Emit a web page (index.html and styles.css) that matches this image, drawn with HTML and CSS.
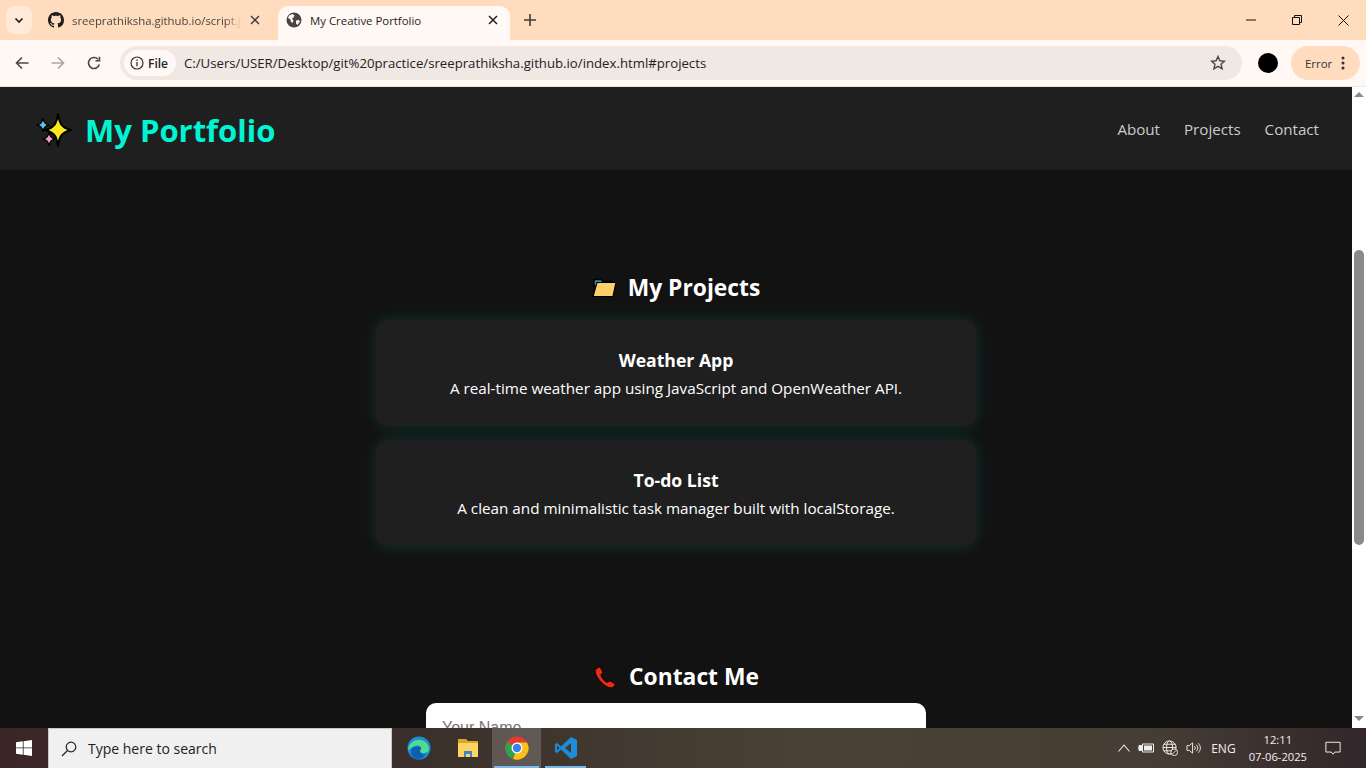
FILE: index.html
```html
<!DOCTYPE html>
<html lang="en">
<head>
    <meta charset="UTF-8">
    <title>My Creative Portfolio</title>
    <link rel="stylesheet" href="styles.css">
</head>
<body>
    <div class="tabstrip">
        <div class="tab-list-btn">
            <svg width="12" height="12" viewBox="0 0 12 12"><path d="M2.500 4.500 6 8l3.500-3.500" fill="none" stroke="#1f1f1f" stroke-width="1.700"/></svg>
        </div>
        <div class="tab">
            <svg class="favicon" width="16" height="16" viewBox="0 0 16 16"><path fill="#1f1f1f" d="M8 0C3.580 0 0 3.580 0 8c0 3.540 2.290 6.530 5.470 7.590.4.070.55-.17.55-.38 0-.19-.01-.82-.01-1.490-2.010.37-2.530-.49-2.690-.94-.09-.23-.48-.94-.82-1.130-.28-.15-.68-.52-.01-.53.63-.01 1.080.58 1.230.82.72 1.210 1.870.87 2.330.66.070-.52.28-.87.51-1.070-1.780-.2-3.640-.89-3.640-3.950 0-.87.31-1.590.82-2.150-.08-.2-.36-1.020.08-2.120 0 0 .67-.21 2.200.82.64-.18 1.320-.27 2-.27s1.360.09 2 .27c1.530-1.040 2.200-.82 2.200-.82.44 1.100.16 1.920.08 2.120.51.56.82 1.270.82 2.150 0 3.070-1.870 3.750-3.650 3.950.29.25.54.73.54 1.480 0 1.070-.01 1.930-.01 2.200 0 .21.15.46.55.38A8.010 8.010 0 0 0 16 8c0-4.420-3.580-8-8-8z"/></svg>
            <span class="tab-title fade">sreeprathiksha.github.io/script.j</span>
            <svg class="tab-close" width="10" height="10" viewBox="0 0 10 10"><path d="M1 1l8 8M9 1l-8 8" stroke="#3c3c3c" stroke-width="1.400"/></svg>
        </div>
        <div class="tab active">
            <svg class="favicon" width="16" height="16" viewBox="0 0 16 16"><circle cx="8" cy="8" r="7.500" fill="#454545"/><path fill="#fff4ee" d="M3 3.500 6.500 2l2 1.500L7.500 5.500 6 6.500l1.500 2L6.500 11 5 10 4.500 7.500 2 6zM10 8.500l3-.5 1 1.500-2.500 3.500-1.500-1.500z"/></svg>
            <span class="tab-title">My Creative Portfolio</span>
            <svg class="tab-close" width="10" height="10" viewBox="0 0 10 10"><path d="M1 1l8 8M9 1l-8 8" stroke="#1f1f1f" stroke-width="1.500"/></svg>
        </div>
        <svg class="new-tab" width="12" height="12" viewBox="0 0 12 12"><path d="M6 0v12M0 6h12" stroke="#3c3c3c" stroke-width="1.600"/></svg>
        <div class="window-btns">
            <svg width="10" height="10" viewBox="0 0 10 10"><path d="M0 5h10" stroke="#111" stroke-width="1"/></svg>
            <svg width="10" height="10" viewBox="0 0 10 10"><path d="M.5 2.500h7v7h-7zM2.500 2.500v-2h7v7h-2" fill="none" stroke="#111" stroke-width="1"/></svg>
            <svg width="11" height="11" viewBox="0 0 11 11"><path d="M.5.5l10 10M10.500.5l-10 10" stroke="#111" stroke-width="1"/></svg>
        </div>
    </div>

    <div class="toolbar">
        <svg class="nav-icon" width="14" height="14" viewBox="0 0 14 14"><path d="M13.500 7H1.500M7 1.500 1.500 7 7 12.500" fill="none" stroke="#474747" stroke-width="1.600"/></svg>
        <svg class="nav-icon" width="14" height="14" viewBox="0 0 14 14"><path d="M.5 7h12M7 1.500 12.500 7 7 12.500" fill="none" stroke="#a9a6a4" stroke-width="1.600"/></svg>
        <svg class="nav-icon" width="14" height="14" viewBox="0 0 14 14"><path d="M12.300 8.500A5.500 5.500 0 1 1 11 3.200M12.500 .8v4h-4" fill="none" stroke="#474747" stroke-width="1.600"/></svg>
        <div class="omnibox">
            <div class="site-chip">
                <svg width="14" height="14" viewBox="0 0 14 14"><circle cx="7" cy="7" r="6" fill="none" stroke="#333" stroke-width="1.200"/><path d="M7 6v4.200M7 3.600v1.300" stroke="#333" stroke-width="1.300"/></svg>
                <span>File</span>
            </div>
            <span class="url">C:/Users/USER/Desktop/git%20practice/sreeprathiksha.github.io/index.html#projects</span>
            <svg class="star" width="16" height="16" viewBox="0 0 16 16"><path d="M8 1.500l1.900 4.300 4.600.4-3.500 3 1.100 4.600L8 11.400l-4.100 2.400L5 9.200l-3.500-3 4.600-.4z" fill="none" stroke="#474747" stroke-width="1.400"/></svg>
        </div>
        <div class="avatar"></div>
        <div class="error-pill">
            <span>Error</span>
            <svg width="4" height="14" viewBox="0 0 4 14"><circle cx="2" cy="2" r="1.500" fill="#333"/><circle cx="2" cy="7" r="1.500" fill="#333"/><circle cx="2" cy="12" r="1.500" fill="#333"/></svg>
        </div>
    </div>

    <div class="viewport">
        <div class="page">
            <header class="site-header">
                <h1 class="logo">
                    <svg width="36" height="36" viewBox="0 0 36 36">
                        <path d="M22 1.500c1.200 10 3.500 14 13 16.500-9.500 2.500-11.800 6.500-13 16.500-1.200-10-3.500-14-13-16.500 9.500-2.500 11.800-6.500 13-16.500z" fill="#ffe81a" stroke="#000" stroke-width="2"/>
                        <path d="M7 6c.8 4.500 2 6 6.500 7-4.500 1-5.700 2.500-6.500 7-.8-4.500-2-6-6.500-7 4.500-1 5.700-2.500 6.500-7z" fill="#62c0f0" stroke="#000" stroke-width="1.300"/>
                        <path d="M13 20c.8 4.500 2 6 6.500 7-4.500 1-5.700 2.500-6.500 7-.8-4.500-2-6-6.500-7 4.500-1 5.700-2.500 6.500-7z" fill="#f59ccb" stroke="#000" stroke-width="1.300"/>
                    </svg>
                    <span class="logo-text">My Portfolio</span>
                </h1>
                <nav class="site-nav">
                    <a href="#about">About</a>
                    <a href="#projects">Projects</a>
                    <a href="#contact">Contact</a>
                </nav>
            </header>

            <section class="section projects" id="projects">
                <h2>
                    <svg width="24" height="20" viewBox="0 0 24 20"><path d="M2 1.500h7l2 2h9v5H2z" fill="#3f87b5" stroke="#000" stroke-width="1.500"/><path d="M5 4.500h19l-3 14H1z" fill="#fdd069" stroke="#000" stroke-width="1.200"/></svg>
                    <span>My Projects</span>
                </h2>
                <div class="card">
                    <h3>Weather App</h3>
                    <p>A real-time weather app using JavaScript and OpenWeather API.</p>
                </div>
                <div class="card">
                    <h3>To-do List</h3>
                    <p>A clean and minimalistic task manager built with localStorage.</p>
                </div>
            </section>

            <section class="section contact" id="contact">
                <h2>
                    <svg width="24" height="24" viewBox="0 0 24 24"><path d="M2 4.500 6.500 1.500c1 .2 3 4 3.500 6 .1.800-1.800 1.500-2 2.500 1 2.500 3.500 5.800 6 7 1 .2 1.800-1.500 2.800-1.300 1.800.8 5 2.500 5.700 3.800.2.800-2.500 3.500-3.500 3.500C11 23.500 1.500 12 2 4.500z" fill="#e0301a" stroke="#2a0000" stroke-width="1.400"/></svg>
                    <span>Contact Me</span>
                </h2>
                <form class="contact-form">
                    <input type="text" placeholder="Your Name">
                </form>
            </section>
        </div>
        <div class="scrollbar">
            <div class="arrow-up"></div>
            <div class="track"><div class="thumb"></div></div>
            <div class="arrow-down"></div>
        </div>
    </div>

    <div class="taskbar">
        <div class="start">
            <svg width="16" height="16" viewBox="0 0 16 16"><path fill="#fff" d="M0 2.300 6.800 1.300v6.200H0zM7.600 1.200 16 0v7.500H7.600zM0 8.300h6.800v6.400L0 13.700zM7.600 8.300H16V16l-8.400-1.200z"/></svg>
        </div>
        <div class="search">
            <svg width="16" height="16" viewBox="0 0 16 16"><circle cx="10" cy="6" r="4.800" fill="none" stroke="#222" stroke-width="1.200"/><path d="M6.500 9.500 1 15" stroke="#222" stroke-width="1.300"/></svg>
            <span>Type here to search</span>
        </div>
        <div class="task-icons">
            <div class="task-icon">
                <svg width="24" height="24" viewBox="0 0 24 24"><circle cx="12" cy="12" r="11.500" fill="#1d8ddb"/><path d="M1 14C2 6 9 3 14 4c5 1 8 5 8 9 0 3-3 4-6 4-2 0-3-1-3-2s1-2 1-3c0-2-3-3-6-2-3 1-5 3-7 4z" fill="#4fdc8f"/><path d="M5 12c3-2 8-2 9 0 .5 1-1 2-1 3 0 3 3 4 6 3-2 3-5 5-8 5-6 0-9-6-6-11z" fill="#0f5fb0"/></svg>
            </div>
            <div class="task-icon">
                <svg width="20" height="20" viewBox="0 0 20 20"><path d="M0 1h8l2 2h10v15H0z" fill="#e0a526"/><path d="M0 5h20v14H0z" fill="#fcd462"/><path d="M6 13h8v6h-2v-3H8v3H6z" fill="#3b88c4"/></svg>
            </div>
            <div class="task-icon open focused">
                <svg width="24" height="24" viewBox="0 0 24 24"><circle cx="12" cy="12" r="11.500" fill="#e33b2e"/><path d="M12 12 22 18A11.500 11.500 0 0 1 8 23z" fill="#fbc116"/><path d="M12 12 8 23A11.500 11.500 0 0 1 2 6z" fill="#2ea44f"/><path d="M12 6.500h10a11.500 11.500 0 0 1 0 11.500l-5-3z" fill="#fbc116"/><circle cx="12" cy="12" r="5.500" fill="#fff"/><circle cx="12" cy="12" r="4.200" fill="#3b82e8"/></svg>
            </div>
            <div class="task-icon open">
                <svg width="24" height="24" viewBox="0 0 24 24"><path d="M17 1 23 4v16l-6 3L7 13.500 3 17 1 16V8l2-1 4 3.500z" fill="#1c8ed8"/><path d="M17 7 11 12l6 5z" fill="#3e3a33"/><path d="M3 9.500 5.500 12 3 14.500z" fill="#3e3a33"/></svg>
            </div>
        </div>
        <div class="tray">
            <svg width="12" height="8" viewBox="0 0 12 8"><path d="M.5 7.500 6 1l5.500 6.500" fill="none" stroke="#eee" stroke-width="1.100"/></svg>
            <svg width="16" height="12" viewBox="0 0 16 12"><path d="M4.500 2h11v8h-11z" fill="none" stroke="#eee"/><path d="M6 3.500h8v5H6z" fill="#eee"/><path d="M0 6h3M1 3.500h2.500v5H1z" stroke="#eee" fill="#eee"/></svg>
            <svg width="16" height="16" viewBox="0 0 17 17"><g fill="none" stroke="#eee"><circle cx="8" cy="8" r="7"/><ellipse cx="8" cy="8" rx="3.200" ry="7"/><path d="M1 8h14M2 4.500h12M2 11.500h12"/></g><circle cx="13" cy="13" r="3.500" fill="#3a332d" stroke="#eee"/><path d="M11 15l4-4" stroke="#eee"/></svg>
            <svg width="16" height="14" viewBox="0 0 17 14"><path d="M1 4.500h2.500L7 1.500v11l-3.500-3H1z" fill="none" stroke="#eee"/><path d="M9 5c1 1 1 3 0 4M11 3.500c2 2 2 5 0 7M13 2c3 3 3 7 0 10" fill="none" stroke="#eee"/></svg>
            <span class="lang">ENG</span>
            <div class="clock"><span>12:11</span><span>07-06-2025</span></div>
            <svg class="notif" width="16" height="15" viewBox="0 0 18 16"><path d="M1 1h16v11h-6l-2 2.500L7 12H1z" fill="none" stroke="#eee" stroke-width="1.100"/></svg>
        </div>
    </div>
</body>
</html>
```

FILE: styles.css
```css
* {
    box-sizing: border-box;
}
body {
    margin: 0;
    height: 768px;
    overflow: hidden;
    display: flex;
    flex-direction: column;
    font-family: 'Open Sans', 'Noto Sans', sans-serif;
    background: #121212;
}

/* browser chrome */
.tabstrip {
    height: 40px;
    flex-shrink: 0;
    display: flex;
    align-items: flex-end;
    padding-left: 6px;
    background: #fedcbd;
}
.tab-list-btn {
    width: 26px;
    height: 28px;
    margin-bottom: 6px;
    border-radius: 8px;
    background: #ffe9d8;
    display: flex;
    align-items: center;
    justify-content: center;
}
.tab {
    width: 242px;
    height: 34px;
    padding: 0 14px 6px 16px;
    display: flex;
    align-items: center;
    gap: 8px;
    font-size: 11.4px;
    color: #4d4540;
}
.tab.active {
    width: 232px;
    padding: 0 12px 6px 8px;
    margin-left: 4px;
    border-radius: 10px 10px 0 0;
    background: #fff8f4;
    color: #1f1f1f;
}
.tab .favicon {
    flex-shrink: 0;
}
.tab-title {
    flex: 1;
    white-space: nowrap;
}
.tab-title.fade {
    -webkit-mask-image: linear-gradient(90deg, #000 90%, transparent 100%);
    mask-image: linear-gradient(90deg, #000 90%, transparent 100%);
}
.tab-close {
    flex-shrink: 0;
}
.new-tab {
    margin: 0 0 14px 14px;
}
.window-btns {
    margin-left: auto;
    height: 40px;
    display: flex;
    align-items: center;
    gap: 36px;
    padding-right: 17px;
}
.toolbar {
    height: 47px;
    flex-shrink: 0;
    display: flex;
    align-items: center;
    padding: 0 6px 0 15px;
    background: #fff8f4;
    border-bottom: 1px solid #f0e6df;
}
.nav-icon {
    margin-right: 22px;
}
.nav-icon:nth-child(3) {
    margin-right: 19px;
}
.omnibox {
    width: 1122px;
    height: 34px;
    border-radius: 17px;
    padding: 0 16px 0 4px;
    display: flex;
    align-items: center;
    background: #f0e8e3;
}
.site-chip {
    height: 26px;
    padding: 0 8px 0 6px;
    display: flex;
    align-items: center;
    gap: 4px;
    border-radius: 13px;
    background: #fff8f4;
    font-size: 12px;
    font-weight: 600;
    color: #222;
}
.url {
    margin-left: 8px;
    font-size: 13.2px;
    color: #222;
    white-space: nowrap;
}
.star {
    margin-left: auto;
}
.avatar {
    width: 20px;
    height: 20px;
    margin-left: 16px;
    border-radius: 50%;
    background: #000;
}
.error-pill {
    width: 69px;
    height: 34px;
    margin-left: 13px;
    border-radius: 17px;
    padding: 0 15px 0 14px;
    display: flex;
    align-items: center;
    justify-content: space-between;
    background: #fedcbd;
    font-size: 11.4px;
    color: #333;
}

/* page */
.viewport {
    flex: 1;
    min-height: 0;
    display: flex;
    overflow: hidden;
}
.page {
    flex: 1;
    min-width: 0;
    overflow: hidden;
    background: #121212;
    color: #fff;
}
.site-header {
    height: 83px;
    padding: 0 33px 0 36px;
    display: flex;
    align-items: center;
    justify-content: space-between;
    background: #1f1f1f;
}
.logo {
    margin: 0;
    padding-top: 3px;
    display: flex;
    align-items: center;
    gap: 13px;
    font-size: 31px;
    line-height: 1;
    color: #00f5d4;
}
.site-nav {
    display: flex;
    gap: 24px;
}
.site-nav a {
    color: #ccc;
    text-decoration: none;
    font-size: 15.15px;
}
.section {
    text-align: center;
}
.section h2 {
    margin: 0;
    display: flex;
    align-items: center;
    justify-content: center;
    gap: 12px;
    font-size: 22.8px;
    line-height: 32px;
}
.projects {
    padding-top: 102px;
}
.contact {
    padding-top: 115px;
}
.card {
    width: 600px;
    height: 106px;
    margin: 16px auto 0;
    padding-top: 27px;
    border-radius: 12px;
    background: #1f1f1f;
    box-shadow: 0 0 15px rgba(0, 245, 212, 0.15);
}
.card + .card {
    margin-top: 14px;
}
.card h3 {
    margin: 0;
    font-size: 17.6px;
    line-height: 26px;
}
.card p {
    margin: 2px 0 0;
    font-size: 15.25px;
    line-height: 26px;
}
.contact-form {
    width: 500px;
    margin: 10px auto 0;
}
.contact-form input {
    width: 100%;
    height: 50px;
    padding: 0 16px;
    border: 0;
    border-radius: 10px;
    background: #fff;
    font-family: 'Liberation Sans', sans-serif;
    font-size: 16px;
}

/* scrollbar */
.scrollbar {
    width: 14px;
    flex-shrink: 0;
    display: flex;
    flex-direction: column;
    align-items: center;
    background: #fff;
}
.arrow-up,
.arrow-down {
    width: 0;
    height: 0;
    border-left: 5px solid transparent;
    border-right: 5px solid transparent;
}
.arrow-up {
    margin-top: 5px;
    border-bottom: 5px solid #8a8a8a;
}
.arrow-down {
    margin-bottom: 7px;
    border-top: 5px solid #8a8a8a;
}
.track {
    flex: 1;
    width: 100%;
}
.thumb {
    width: 10px;
    height: 295px;
    margin: 153px auto 0;
    border-radius: 5px;
    background: #8a8a8a;
}

/* taskbar */
.taskbar {
    height: 40px;
    flex-shrink: 0;
    display: flex;
    align-items: center;
    background: linear-gradient(90deg, #3a2626 0%, #3a2f2a 30%, #4a4236 60%, #453c33 85%, #33262a 100%);
    color: #f0f0f0;
}
.start {
    width: 48px;
    display: flex;
    justify-content: center;
}
.search {
    width: 344px;
    height: 40px;
    padding-left: 12px;
    display: flex;
    align-items: center;
    gap: 11px;
    background: #f0f0f0;
    border: 1px solid #c8c8c8;
    border-width: 1px 1px 0;
    font-size: 14px;
    color: #222;
}
.task-icons {
    display: flex;
    margin-left: 2px;
}
.task-icon {
    width: 49px;
    height: 40px;
    display: flex;
    align-items: center;
    justify-content: center;
}
.task-icon.open {
    background: linear-gradient(#76b9ed, #76b9ed) center bottom / 41px 2px no-repeat;
}
.task-icon.focused {
    background: linear-gradient(#76b9ed, #76b9ed) center bottom / 45px 2px no-repeat, rgba(255, 255, 255, 0.18);
}
.tray {
    margin-left: auto;
    display: flex;
    align-items: center;
    gap: 8px;
}
.lang {
    margin-left: 1px;
    font-size: 12px;
}
.clock {
    margin-left: 5px;
    display: flex;
    flex-direction: column;
    align-items: center;
    font-size: 11.2px;
    line-height: 17px;
}
.notif {
    margin-left: 10px;
    margin-right: 25px;
}
```
